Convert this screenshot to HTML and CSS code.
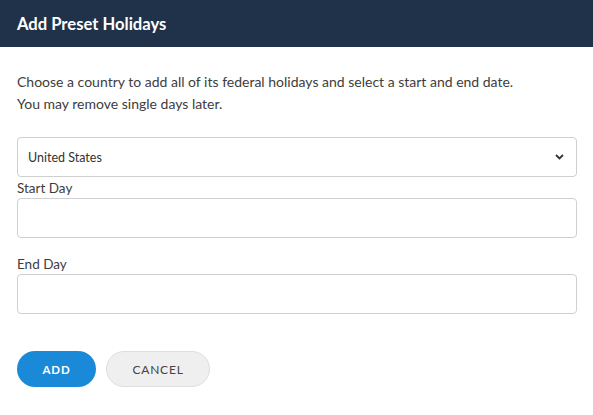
FILE: index.html
```html
<!DOCTYPE html>
<html>
<head>
<meta charset="utf-8">
<link rel="stylesheet" href="styles.css">
</head>
<body>
<div class="modal">
  <header class="modal-header">
    <h1 class="title">Add Preset Holidays</h1>
  </header>
  <div class="modal-body">
    <p class="intro">Choose a country to add all of its federal holidays and select a start and end date.<br>You may remove single days later.</p>
    <div class="select">
      <span>United States</span>
      <svg class="chev" width="9" height="6" viewBox="0 0 9 6"><path d="M1 1 L4.5 4.5 L8 1" fill="none" stroke="#333" stroke-width="1.8"/></svg>
    </div>
    <div class="group">
      <label class="label">Start Day</label>
      <div class="input"></div>
    </div>
    <div class="group">
      <label class="label">End Day</label>
      <div class="input"></div>
    </div>
    <div class="actions">
      <button class="btn btn-primary">ADD</button>
      <button class="btn btn-secondary">CANCEL</button>
    </div>
  </div>
</div>
</body>
</html>
```
FILE: styles.css
```css
* { box-sizing: border-box; }
html, body { margin: 0; padding: 0; background: #fff; }
body { font-family: "Lato", "Open Sans", sans-serif; color: #3b3b3b; }
.modal-header {
  background: #1f324a;
  height: 47px;
  display: flex;
  align-items: center;
  padding: 0 17px;
}
.title {
  margin: 0;
  color: #fff;
  font-size: 16.6px;
  font-weight: 700;
}
.modal-body {
  display: flex;
  flex-direction: column;
  padding: 24px 16px 0 17px;
}
.intro {
  margin: 0 0 22px;
  font-size: 14px;
  line-height: 22px;
  color: #3d3d3d;
}
.select {
  height: 40px;
  border: 1px solid #cfcfcf;
  border-radius: 4px;
  display: flex;
  align-items: center;
  justify-content: space-between;
  padding: 0 12px 0 10px;
  font-size: 12.5px;
  color: #333;
}
.group { margin-bottom: 15px; }
.label {
  display: block;
  font-size: 13.5px;
  line-height: 16px;
  margin: 3px 0 2px;
  color: #3d3d3d;
}
.input {
  height: 40px;
  border: 1px solid #cfcfcf;
  border-radius: 4px;
}
.actions { display: flex; gap: 10px; margin-top: 22px; }
.btn {
  height: 36px;
  border-radius: 18px;
  font-family: "Lato", "Open Sans", sans-serif;
  font-size: 11.5px;
  letter-spacing: 0.8px;
  border: 1px solid transparent;
  padding: 0;
}
.btn-primary {
  width: 79px;
  background: #1a8ad8;
  color: #fff;
  font-weight: 700;
}
.btn-secondary {
  width: 104px;
  background: #efefef;
  border-color: #dedede;
  color: #444;
  font-size: 12px;
  font-weight: 400;
}
```
